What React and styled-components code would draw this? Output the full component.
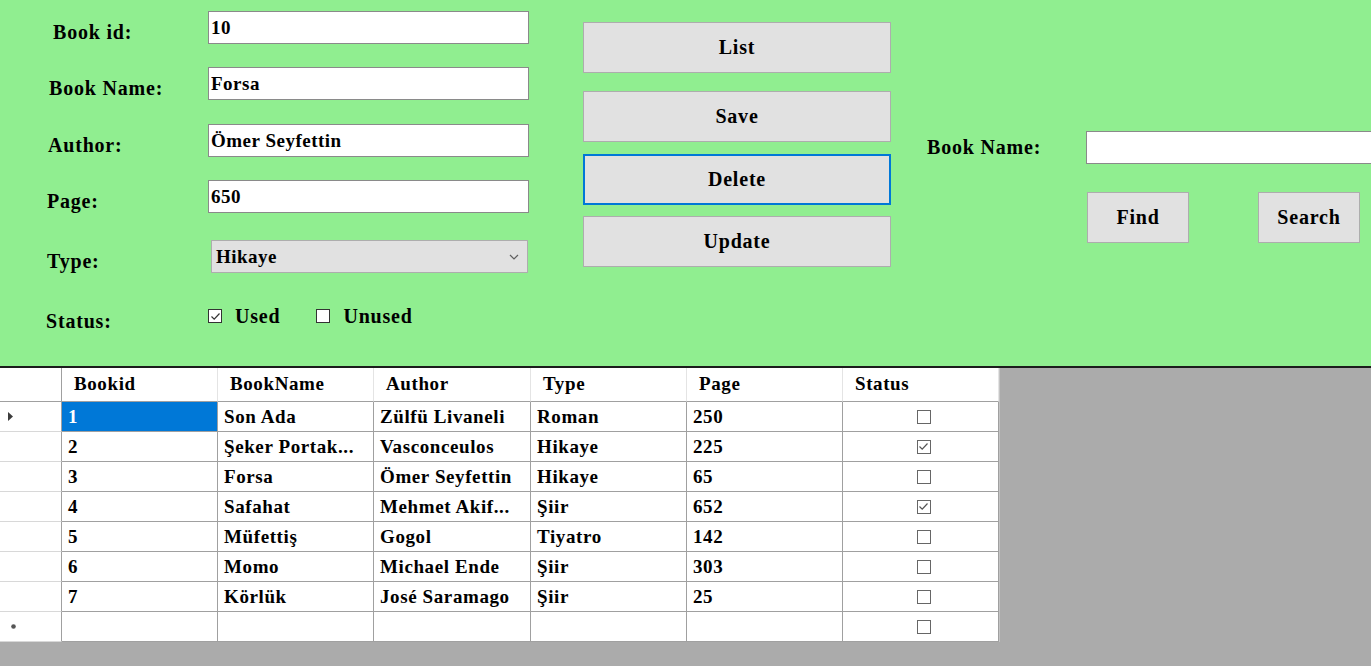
import React from "react";
import styled, { createGlobalStyle } from "styled-components";

const GlobalStyle = createGlobalStyle`
  html, body { margin: 0; padding: 0; }
  body {
    font-family: "Liberation Serif", "Times New Roman", serif;
    background: #ababab;
    overflow: hidden;
  }
  * { box-sizing: border-box; }
`;

const Page = styled.div`
  width: 1371px;
  height: 666px;
  background: #ababab;
  overflow: hidden;
  color: #000;
`;

const TopPanel = styled.div`
  height: 368px;
  background: #90ee90;
  border-bottom: 2px solid #1c1c1c;
  display: flex;
  align-items: flex-start;
`;

const FormColumn = styled.div`
  width: 529px;
  flex-shrink: 0;
  padding-top: 11px;
  display: flex;
  flex-direction: column;
`;

const FormRow = styled.div`
  display: grid;
  grid-template-columns: 208px 1fr;
  align-items: center;
  height: 33px;
  margin-top: ${(p) => p.$mt || 0}px;
`;

const FieldLabel = styled.div`
  padding-left: ${(p) => p.$indent}px;
  padding-top: 10px;
  font-weight: bold;
  font-size: 20px;
  letter-spacing: 0.8px;
  white-space: nowrap;
`;

const TextBox = styled.input`
  width: ${(p) => p.$w || 321}px;
  height: 33px;
  border: 1px solid #8a8a8a;
  background: #fff;
  padding: 1px 2px 0 2px;
  font-family: inherit;
  font-weight: bold;
  font-size: 19px;
  letter-spacing: 0.5px;
  color: #000;
  outline: none;
`;

const ComboBox = styled.div`
  margin-left: 3px;
  width: 317px;
  height: 33px;
  background: #e1e1e1;
  border: 1px solid #adadad;
  display: flex;
  align-items: center;
  justify-content: space-between;
  padding: 0 8px 0 4px;
  font-weight: bold;
  font-size: 19px;
  letter-spacing: 0.5px;
`;

const CheckGroup = styled.div`
  display: flex;
  align-items: center;
  height: 100%;
`;

const CheckItem = styled.label`
  display: flex;
  align-items: center;
  gap: 13px;
  margin-left: ${(p) => p.$ml || 0}px;
  font-weight: bold;
  font-size: 20px;
  letter-spacing: 0.8px;
  padding-bottom: 1px;
`;

const Box = styled.span`
  width: ${(p) => p.$size || 13}px;
  height: ${(p) => p.$size || 13}px;
  border: 1px solid ${(p) => p.$color || "#333"};
  background: #fff;
  display: inline-flex;
  align-items: center;
  justify-content: center;
  flex-shrink: 0;
`;

const ButtonColumn = styled.div`
  margin-left: 54px;
  width: 308px;
  flex-shrink: 0;
  padding-top: 22px;
  display: flex;
  flex-direction: column;
`;

const WinButton = styled.button`
  width: ${(p) => p.$w || 308}px;
  height: 51px;
  margin-top: ${(p) => p.$mt || 0}px;
  background: #e1e1e1;
  border: ${(p) => (p.$active ? "2px solid #0078d7" : "1px solid #adadad")};
  font-family: inherit;
  font-weight: bold;
  font-size: 20px;
  letter-spacing: 0.8px;
  color: #000;
  padding: 0;
  cursor: default;
`;

const SearchColumn = styled.div`
  margin-left: 36px;
  padding-top: 131px;
  display: flex;
  flex-direction: column;
`;

const SearchRow = styled.div`
  display: flex;
  align-items: center;
  height: 33px;
`;

const SearchLabel = styled.div`
  width: 159px;
  font-weight: bold;
  font-size: 20px;
  letter-spacing: 0.8px;
  padding-bottom: 1px;
  white-space: nowrap;
`;

const SearchButtons = styled.div`
  display: flex;
  gap: 69px;
  margin-top: 28px;
  padding-left: 160px;
`;

const GridArea = styled.div`
  display: grid;
  grid-template-columns: 62px 156px 156px 157px 156px 156px 156px;
  width: fit-content;
  background: #fff;
  border-right: 1px solid #c4c4c4;
`;

const HeadCell = styled.div`
  height: 34px;
  border-bottom: 1px solid #a0a0a0;
  border-right: 1px solid ${(p) => (p.$corner ? "#a0a0a0" : "#e4e4e4")};
  padding-left: 12px;
  display: flex;
  align-items: center;
  font-weight: bold;
  font-size: 19px;
  letter-spacing: 0.6px;
  padding-bottom: 1px;
  white-space: nowrap;
`;

const RowHead = styled.div`
  height: 30px;
  border-bottom: 1px solid #d8d8d8;
  border-right: 1px solid #a0a0a0;
  display: flex;
  align-items: center;
  padding-left: ${(p) => p.$pad}px;
`;

const Cell = styled.div`
  height: 30px;
  border-bottom: 1px solid #a0a0a0;
  border-right: 1px solid #a0a0a0;
  padding-left: 6px;
  display: flex;
  align-items: center;
  justify-content: ${(p) => (p.$center ? "center" : "flex-start")};
  font-weight: bold;
  font-size: 19px;
  letter-spacing: 0.6px;
  white-space: nowrap;
  overflow: hidden;
  background: ${(p) => (p.$selected ? "#0078d7" : "#fff")};
  color: ${(p) => (p.$selected ? "#fff" : "#000")};
`;

const Check = ({ color }) => (
  <svg width="11" height="11" viewBox="0 0 11 11">
    <path d="M1.5 5.5 L4.2 8.2 L9.5 2.5" fill="none" stroke={color} strokeWidth="1.2" />
  </svg>
);

const Chevron = () => (
  <svg width="10" height="6" viewBox="0 0 10 6">
    <path d="M1 1 L5 5 L9 1" fill="none" stroke="#606060" strokeWidth="1.2" />
  </svg>
);

const Arrow = () => (
  <svg width="6" height="9" viewBox="0 0 6 9">
    <path d="M0 0 L5 4.5 L0 9 Z" fill="#3c3c3c" />
  </svg>
);

const Star = () => (
  <svg width="7" height="7" viewBox="0 0 7 7">
    <circle cx="3.5" cy="3.5" r="2.3" fill="#555" />
  </svg>
);

const rows = [
  ["1", "Son Ada", "Zülfü Livaneli", "Roman", "250", false],
  ["2", "Şeker Portak...", "Vasconceulos", "Hikaye", "225", true],
  ["3", "Forsa", "Ömer Seyfettin", "Hikaye", "65", false],
  ["4", "Safahat", "Mehmet Akif...", "Şiir", "652", true],
  ["5", "Müfettiş", "Gogol", "Tiyatro", "142", false],
  ["6", "Momo", "Michael Ende", "Şiir", "303", false],
  ["7", "Körlük", "José Saramago", "Şiir", "25", false],
];

const headers = ["Bookid", "BookName", "Author", "Type", "Page", "Status"];

export default function App() {
  return (
    <Page>
      <GlobalStyle />
      <TopPanel>
        <FormColumn>
          <FormRow>
            <FieldLabel $indent={53}>Book id:</FieldLabel>
            <TextBox readOnly defaultValue="10" />
          </FormRow>
          <FormRow $mt={23}>
            <FieldLabel $indent={49}>Book Name:</FieldLabel>
            <TextBox readOnly defaultValue="Forsa" />
          </FormRow>
          <FormRow $mt={24}>
            <FieldLabel $indent={48}>Author:</FieldLabel>
            <TextBox readOnly defaultValue="Ömer Seyfettin" />
          </FormRow>
          <FormRow $mt={23}>
            <FieldLabel $indent={47}>Page:</FieldLabel>
            <TextBox readOnly defaultValue="650" />
          </FormRow>
          <FormRow $mt={27}>
            <FieldLabel $indent={47}>Type:</FieldLabel>
            <ComboBox>
              <span>Hikaye</span>
              <Chevron />
            </ComboBox>
          </FormRow>
          <FormRow $mt={27}>
            <FieldLabel $indent={46}>Status:</FieldLabel>
            <CheckGroup>
              <CheckItem>
                <Box $size={14}>
                  <Check color="#333" />
                </Box>
                Used
              </CheckItem>
              <CheckItem $ml={36}>
                <Box $size={14} />
                Unused
              </CheckItem>
            </CheckGroup>
          </FormRow>
        </FormColumn>

        <ButtonColumn>
          <WinButton>List</WinButton>
          <WinButton $mt={18}>Save</WinButton>
          <WinButton $mt={12} $active>
            Delete
          </WinButton>
          <WinButton $mt={11}>Update</WinButton>
        </ButtonColumn>

        <SearchColumn>
          <SearchRow>
            <SearchLabel>Book Name:</SearchLabel>
            <TextBox readOnly defaultValue="" $w={290} />
          </SearchRow>
          <SearchButtons>
            <WinButton $w={102}>Find</WinButton>
            <WinButton $w={102}>Search</WinButton>
          </SearchButtons>
        </SearchColumn>
      </TopPanel>

      <GridArea>
        <HeadCell $corner />
        {headers.map((h) => (
          <HeadCell key={h}>{h}</HeadCell>
        ))}
        {rows.map((r, i) => (
          <React.Fragment key={r[0]}>
            <RowHead $pad={8}>{i === 0 ? <Arrow /> : null}</RowHead>
            <Cell $selected={i === 0}>{r[0]}</Cell>
            <Cell>{r[1]}</Cell>
            <Cell>{r[2]}</Cell>
            <Cell>{r[3]}</Cell>
            <Cell>{r[4]}</Cell>
            <Cell $center>
              <Box $size={14} $color="#666">{r[5] ? <Check color="#555" /> : null}</Box>
            </Cell>
          </React.Fragment>
        ))}
        <RowHead $pad={10}>
          <Star />
        </RowHead>
        <Cell />
        <Cell />
        <Cell />
        <Cell />
        <Cell />
        <Cell $center>
          <Box $size={14} $color="#666" />
        </Cell>
      </GridArea>
    </Page>
  );
}
